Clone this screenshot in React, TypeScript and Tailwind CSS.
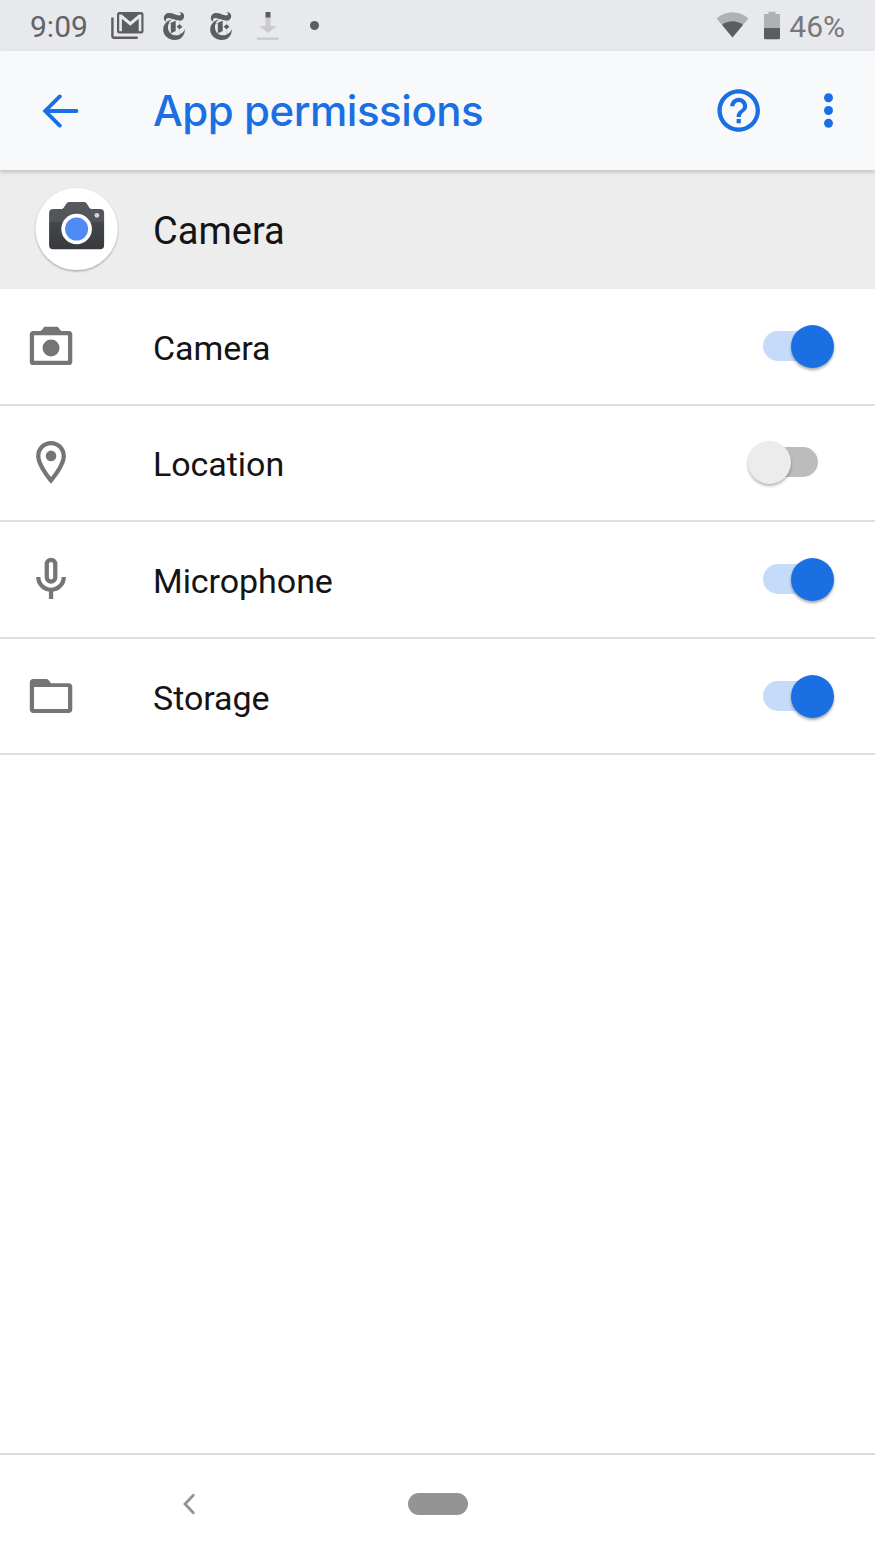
import type { ReactNode } from "react";
import { SiNewyorktimes } from "react-icons/si";

const PERMISSIONS = [
  { name: "Camera", icon: <CameraIcon />, on: true },
  { name: "Location", icon: <PinIcon />, on: false },
  { name: "Microphone", icon: <MicIcon />, on: true },
  { name: "Storage", icon: <FolderIcon />, on: true },
];

function CameraIcon() {
  return (
    <svg viewBox="-0.25 0.25 24 24" className="size-[51px]" fill="#757575">
      <path
        fillRule="evenodd"
        d="M20.5 5h-3.2c-.7 0-1.1-.6-1.5-1.2-.3-.5-.6-.8-1.200-.8H9.400c-.6 0-.9.3-1.200.8C7.800 4.400 7.400 5 6.700 5H3.500C2.700 5 2 5.700 2 6.500v13c0 .8.7 1.500 1.500 1.500h17c.8 0 1.500-.7 1.500-1.500v-13c0-.8-.7-1.500-1.500-1.500zM4 7h16v12H4z"
      />
      <circle cx="12" cy="13" r="4" />
    </svg>
  );
}

function PinIcon() {
  return (
    <svg viewBox="-0.25 0.1 24 24" className="size-[51px]" fill="#757575">
      <path d="M12 2C8.130 2 5 5.130 5 9c0 5.250 7 13 7 13s7-7.750 7-13c0-3.870-3.130-7-7-7zM7 9c0-2.760 2.240-5 5-5s5 2.240 5 5c0 2.880-2.880 7.190-5 9.880C9.920 16.210 7 11.850 7 9z" />
      <circle cx="12" cy="9" r="2.500" />
    </svg>
  );
}

function MicIcon() {
  return (
    <svg viewBox="-0.25 0.25 24 24" className="size-[51px]" fill="none" stroke="#757575" strokeWidth="2">
      <rect x="10" y="3" width="4" height="10.200" rx="2" />
      <path d="M6 11.100a6 6 0 0 0 12 0M12 17v4.400" />
    </svg>
  );
}

function FolderIcon() {
  return (
    <svg viewBox="-0.25 0.25 24 24" className="size-[51px]" fill="#757575">
      <path
        fillRule="evenodd"
        d="M3.600 4h6.100c.5 0 .9.200 1.200.6L12 6h8.400c.9 0 1.600.7 1.600 1.600v10.800c0 .9-.7 1.600-1.600 1.600H3.600C2.700 20 2 19.300 2 18.400V5.600C2 4.700 2.700 4 3.600 4zM4 7.800v10.300h16V7.800z"
      />
    </svg>
  );
}

function AppIcon() {
  return (
    <svg viewBox="-0.6 0 90 90" className="size-[90px]">
      <defs>
        <linearGradient id="body" x1="0" y1="0" x2="0" y2="1">
          <stop offset="0" stopColor="#565a5f" />
          <stop offset="0.42" stopColor="#51555a" />
          <stop offset="0.43" stopColor="#43474b" />
          <stop offset="1" stopColor="#37393d" />
        </linearGradient>
        <filter id="shade" x="-10%" y="-10%" width="120%" height="125%">
          <feDropShadow dx="0" dy="1.2" stdDeviation="0.8" floodColor="#000" floodOpacity="0.35" />
        </filter>
      </defs>
      <circle cx="45" cy="44" r="41" fill="#fff" filter="url(#shade)" />
      <path
        d="M21.500 24H30c3 0 4-7 7.500-7h15c3.500 0 4.500 7 7.500 7h8.500a4 4 0 0 1 4 4v32.200a4 4 0 0 1-4 4h-47a4 4 0 0 1-4-4V28a4 4 0 0 1 4-4z"
        fill="url(#body)"
      />
      <circle cx="45" cy="44" r="15.300" fill="#fff" />
      <circle cx="45" cy="44" r="11.500" fill="#508af5" />
      <circle cx="65.300" cy="30.300" r="2.400" fill="#d3d5d7" />
    </svg>
  );
}

function Switch({ on }: { on: boolean }) {
  return (
    <div className="relative h-[43px] w-[86px]">
      <div
        className={`absolute left-[15.5px] top-[6px] h-[30px] w-[55px] rounded-full ${
          on ? "bg-[#c5dbf9]" : "bg-[#bcbcbc]"
        }`}
      />
      <div
        className={`absolute top-0 size-[43px] rounded-full ${
          on
            ? "right-0 bg-[#1a70e3] shadow-[0_2px_3px_rgba(0,0,0,0.35)]"
            : "left-0 bg-[#ececec] shadow-[0_2px_3px_rgba(0,0,0,0.3)]"
        }`}
      />
    </div>
  );
}

function PermissionRow({ name, icon, on }: { name: string; icon: ReactNode; on: boolean }) {
  return (
    <div className="flex h-[116.6px] items-center border-b-2 border-[#dedede] pl-[25px] pr-[41.500px]">
      <div className="w-[128px]">{icon}</div>
      <span className="flex-1 pt-[3px] text-[34px] leading-[40px] tracking-[-0.05px] text-[#141414]">{name}</span>
      <Switch on={on} />
    </div>
  );
}

function StatusBar() {
  return (
    <div className="flex h-[51px] items-center justify-between bg-[#e8e9ec] text-[30px] leading-[36px]">
      <div className="flex items-center">
        <span className="ml-[30px] w-[80px] pt-[3px] text-[#626366]">9:09</span>
        {/* notifications */}
        <svg viewBox="110 10 35 31" className="h-[31px] w-[35px]">
          <path d="M112.400 17.500v18.500a1.800 1.800 0 0 0 1.800 1.800h23.500" fill="none" stroke="#5c5d60" strokeWidth="2.400" />
          <rect x="117" y="12" width="26.500" height="21.500" rx="2.500" fill="#5c5d60" />
          <path d="M119.200 31.200V14.600h2.500l8.600 7.200 8.600-7.200h2.500v16.600h-2.700V18.800l-8.400 7-8.400-7v12.400z" fill="#e8e9ec" />
        </svg>
        <SiNewyorktimes className="ml-[14.500px] size-[28px]" color="#5c5d60" />
        <SiNewyorktimes className="ml-[19px] size-[28px]" color="#5c5d60" />
        <svg viewBox="256 10 24 32" className="ml-[21.500px] h-[32px] w-[24px]">
          <path d="M265.500 17h5v9h6.500l-9 7-9-7h6.500zM257 37.500h21.500v2.600H257z" fill="#cbccce" />
          <path d="M265.500 12h5v5.500h-5z" fill="#5c5d60" />
        </svg>
        <div className="ml-[29.500px] size-[9px] rounded-full bg-[#5c5d60]" />
      </div>
      <div className="flex items-center pr-[30px]">
        <svg viewBox="716 10 66 31" className="mr-[7.500px] h-[31px] w-[66px]">
          <path d="M732.500 37.500L716.600 18.400c9-8.200 22.800-8.200 31.800 0z" fill="#b0b1b3" />
          <path d="M732.500 37.500L722 24.800c6-4.800 15-4.800 21 0z" fill="#5c5d60" />
          <path d="M764 14h4.500v-2.200h7V14h4.500v14h-16z" fill="#b0b1b3" />
          <path d="M764 28h16v10a1.200 1.200 0 0 1-1.200 1.200h-13.600a1.200 1.200 0 0 1-1.200-1.200z" fill="#5c5d60" />
        </svg>
        <span className="pt-[3px] text-[#77787b]">46%</span>
      </div>
    </div>
  );
}

function Toolbar() {
  return (
    <header className="z-10 flex h-[119px] items-center bg-[#f8f9fb] text-[#1a70e3] shadow-[0_2px_4px_rgba(0,0,0,0.2)]">
      <svg viewBox="0 0 38 34" className="ml-[42px] h-[34px] w-[38px]" fill="none" stroke="currentColor" strokeWidth="3.800" strokeLinecap="round">
        <path d="M17.800 2.400L3.200 17l14.600 14.600M3.200 17h31.300" />
      </svg>
      <h1 className="ml-[73px] flex-1 font-['Inter',sans-serif] text-[42px] font-medium leading-[50px] tracking-[-0.47px]">
        App permissions
      </h1>
      <svg viewBox="-0.1 0 24 24" className="size-[51px]" fill="currentColor">
        <path d="M11 18h2v-2h-2v2zm1-16C6.480 2 2 6.480 2 12s4.480 10 10 10 10-4.480 10-10S17.520 2 12 2zm0 18c-4.410 0-8-3.590-8-8s3.590-8 8-8 8 3.590 8 8-3.590 8-8 8zm0-14c-2.210 0-4 1.790-4 4h2c0-1.100.9-2 2-2s2 .9 2 2c0 2-3 1.750-3 5h2c0-2.250 3-2.500 3-5 0-2.210-1.790-4-4-4z" />
      </svg>
      <svg viewBox="0 0 24 24" className="ml-[38.500px] mr-[21.500px] size-[51px]" fill="currentColor">
        <circle cx="12" cy="6" r="2.100" />
        <circle cx="12" cy="12" r="2.100" />
        <circle cx="12" cy="18" r="2.100" />
      </svg>
    </header>
  );
}

export default function App() {
  return (
    <div className="flex h-[1555px] w-[875px] flex-col overflow-hidden bg-white font-['Roboto',sans-serif]">
      <StatusBar />
      <Toolbar />
      <div className="flex h-[119px] items-center bg-[#ededed] pl-[31px] text-[38px] leading-[46px] text-[#141414]">
        <AppIcon />
        <span className="ml-[32px] pt-[3px]">Camera</span>
      </div>
      <main className="flex-1">
        {PERMISSIONS.map((p) => (
          <PermissionRow key={p.name} {...p} />
        ))}
      </main>
      {/* navigation bar */}
      <nav className="flex h-[102px] items-center border-t-2 border-[#dcdcdc] pb-[2px]">
        <svg viewBox="0 0 14 24" className="ml-[182px] h-[24px] w-[14px]" fill="none" stroke="#949494" strokeWidth="2.800" strokeLinecap="round">
          <path d="M11.300 3.200L3 12l8.300 8.800" />
        </svg>
        <div className="ml-[211.500px] h-[21.500px] w-[60px] rounded-full bg-[#949494]" />
      </nav>
    </div>
  );
}
